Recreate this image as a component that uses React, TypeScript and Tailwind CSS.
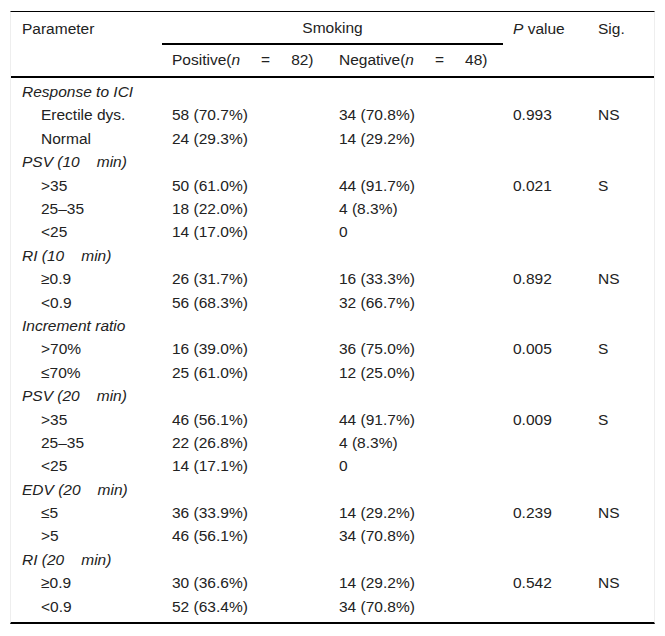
import React from "react";

type Row = string[];

interface Group
{
	name: string;
	time?: string;
	rows: Row[];
}

const groups: Group[] = [
	{
		name: "Response to ICI",
		rows: [
			["Erectile dys.", "58 (70.7%)", "34 (70.8%)", "0.993", "NS"],
			["Normal", "24 (29.3%)", "14 (29.2%)"],
		],
	},
	{
		name: "PSV (",
		time: "10",
		rows: [
			[">35", "50 (61.0%)", "44 (91.7%)", "0.021", "S"],
			["25–35", "18 (22.0%)", "4 (8.3%)"],
			["<25", "14 (17.0%)", "0"],
		],
	},
	{
		name: "RI (",
		time: "10",
		rows: [
			["≥0.9", "26 (31.7%)", "16 (33.3%)", "0.892", "NS"],
			["<0.9", "56 (68.3%)", "32 (66.7%)"],
		],
	},
	{
		name: "Increment ratio",
		rows: [
			[">70%", "16 (39.0%)", "36 (75.0%)", "0.005", "S"],
			["≤70%", "25 (61.0%)", "12 (25.0%)"],
		],
	},
	{
		name: "PSV (",
		time: "20",
		rows: [
			[">35", "46 (56.1%)", "44 (91.7%)", "0.009", "S"],
			["25–35", "22 (26.8%)", "4 (8.3%)"],
			["<25", "14 (17.1%)", "0"],
		],
	},
	{
		name: "EDV (",
		time: "20",
		rows: [
			["≤5", "36 (33.9%)", "14 (29.2%)", "0.239", "NS"],
			[">5", "46 (56.1%)", "34 (70.8%)"],
		],
	},
	{
		name: "RI (",
		time: "20",
		rows: [
			["≥0.9", "30 (36.6%)", "14 (29.2%)", "0.542", "NS"],
			["<0.9", "52 (63.4%)", "34 (70.8%)"],
		],
	},
];

const cols = "grid grid-cols-[150px_167px_174px_85px_1fr]";

const App = () =>
{
	return (
		<div
			className="bg-white min-h-[636px] pt-[11px] pl-[10px] text-[15.5px] text-[#222]"
			style={{ fontFamily: '"Liberation Sans", Arial, sans-serif' }}
		>
			<div className="w-[645px] border-x border-x-[#eee] border-t border-t-black border-b-2 border-b-black pl-[1px] pb-[4px]">

				{/* HEADER */}
				<div className={cols}>
					<div className="h-[33px] flex items-center px-[10px]">Parameter</div>
					<div className="col-span-2 h-[33px] border-b-2 border-black flex items-center justify-center">
						Smoking
					</div>
					<div className="h-[33px] flex items-center px-[10px]">
						<i>P</i>&nbsp;value
					</div>
					<div className="h-[33px] flex items-center px-[10px]">Sig.</div>
				</div>
				<div className={`${cols} border-b-2 border-black -ml-[1px] pl-[1px]`}>
					<div />
					<div className="h-[31px] flex items-center px-[10px] pb-[1px]">
						Positive(<i>n</i>
						<span className="mx-[21px]">=</span>82)
					</div>
					<div className="h-[31px] flex items-center px-[10px] pb-[1px]">
						Negative(<i>n</i>
						<span className="mx-[21px]">=</span>48)
					</div>
					<div />
					<div />
				</div>

				{/* BODY */}
				<div className="pt-[2px]">
					{groups.map((g, gi) => (
						<div key={gi}>
							<div className="h-[23.4px] flex items-center px-[10px] italic">
								{g.name}
								{g.time && (
									<>
										{g.time}
										<span className="inline-block w-[17px]" />
										min)
									</>
								)}
							</div>
							{g.rows.map((r, ri) => (
								<div key={ri} className={`${cols} h-[23.4px] items-center`}>
									<div className="pl-[29px]">{r[0]}</div>
									<div className="px-[10px]">{r[1]}</div>
									<div className="px-[10px]">{r[2]}</div>
									<div className="px-[10px]">{r[3] ?? ""}</div>
									<div className="px-[10px]">{r[4] ?? ""}</div>
								</div>
							))}
						</div>
					))}
				</div>
			</div>
		</div>
	);
};

export default App;
